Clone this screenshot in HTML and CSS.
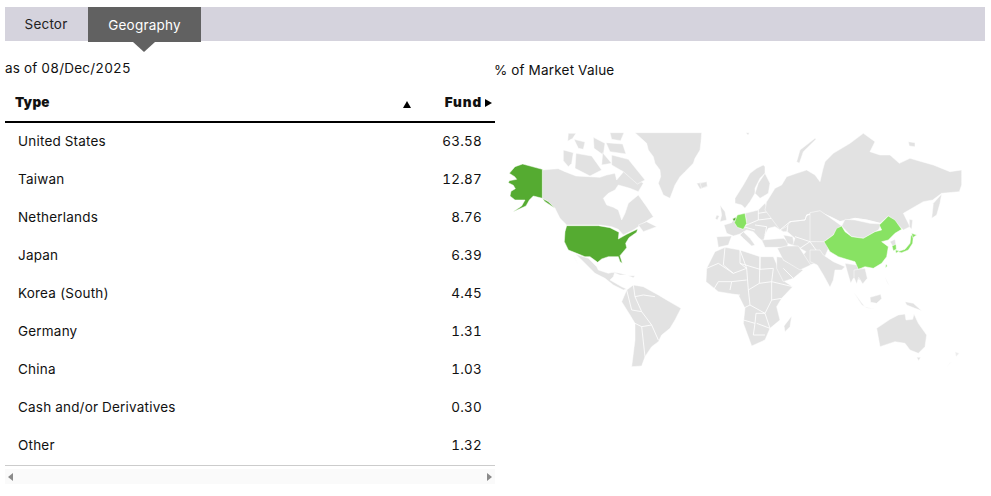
FILE: index.html
```html
<!DOCTYPE html>
<html lang="en">
<head>
<meta charset="utf-8">
<title>Exposure breakdowns</title>
<link rel="stylesheet" href="styles.css">
</head>
<body>
<nav class="tabs">
  <button class="tab">Sector</button>
  <button class="tab tab-active">Geography</button>
</nav>
<main class="panels">
  <section class="left">
    <p class="asof">as of 08/Dec/2025</p>
    <div class="table">
      <div class="head">
        <span class="head-type">Type</span>
        <span class="sort-up"></span>
        <span class="head-fund">Fund</span>
        <span class="sort-right"></span>
      </div>
      <div class="row"><span>United States</span><span>63.58</span></div>
      <div class="row"><span>Taiwan</span><span>12.87</span></div>
      <div class="row"><span>Netherlands</span><span>8.76</span></div>
      <div class="row"><span>Japan</span><span>6.39</span></div>
      <div class="row"><span>Korea (South)</span><span>4.45</span></div>
      <div class="row"><span>Germany</span><span>1.31</span></div>
      <div class="row"><span>China</span><span>1.03</span></div>
      <div class="row"><span>Cash and/or Derivatives</span><span>0.30</span></div>
      <div class="row"><span>Other</span><span>1.32</span></div>
    </div>
    <div class="scrollbar"><span class="arrow-left"></span><span class="arrow-right"></span></div>
  </section>
  <section class="right">
    <p class="maptitle">% of Market Value</p>
    <svg class="map" viewBox="495 90 490 290" width="490" height="290" aria-label="World map">
      <!-- North America, origin 500,120 -->
      <g class="land" transform="translate(500 120) scale(.33333)">
        <path d="M127 150L150 148L175 146L195 155L228 168L265 170L300 172L320 165L345 160L350 180L375 150L395 165L430 190L415 215L390 205L355 195L345 210L325 220L310 235L320 255L340 262L355 270L365 300L375 280L385 250L415 225L440 260L460 290L430 310L400 330L370 345L355 328L335 320L300 315L200 315L180 295L165 265L145 245L127 235Z"/>
        <path d="M405 38L605 38L603 65L600 90L585 115L580 130L555 155L540 170L525 195L510 235L490 225L475 190L482 170L480 150L465 130L460 110L445 90L440 70Z"/>
        <path d="M590 190L620 185L622 200L600 207Z"/>
        <path d="M205 40L228 40L218 55L203 64Z"/>
        <path d="M190 90L220 98L215 130L205 140L190 122Z"/>
        <path d="M222 58L255 66L250 88L235 85Z"/>
        <path d="M228 100L275 108L305 150L270 168L225 145Z"/>
        <path d="M280 52L315 70L310 105L282 85Z"/>
        <path d="M330 38L372 38L362 62L335 58Z"/>
        <path d="M318 68L368 72L378 102L330 95Z"/>
        <path d="M308 98L335 130L305 135Z"/>
        <path d="M335 105L385 118L435 180L412 192L370 155L335 135Z"/>
        <path d="M415 315L440 305L470 320L430 335Z"/>
        <path class="dark" d="M68 132L127 148L127 235L100 228L88 240L78 258L38 276L65 258L75 240L45 240L30 228L33 214L46 206L40 196L25 188L28 182L50 178L44 170L28 160L45 140Z"/>
        <path class="dark" d="M127 235L145 245L165 265L150 255L135 245Z"/>
      </g>
      <!-- USA and Mexico, origin 555,215 -->
      <g class="land" transform="translate(555 215) scale(.33333)">
        <path d="M62 118L100 130L125 155L130 165L160 175L180 170L175 185L165 195L200 215L215 222L205 225L175 210L150 190L120 175L90 145L75 130Z"/>
        <path d="M55 120L70 150L60 132Z"/>
        <path d="M170 170L195 175L215 180L195 180Z"/>
        <path d="M220 182L240 182L235 188Z"/>
        <path class="dark" d="M35 32L130 32L165 38L192 52L190 72L215 58L248 42L245 52L222 68L212 85L215 98L195 122L202 145L195 140L190 125L160 125L140 132L128 142L105 125L90 125L65 115L40 105L28 80L30 50Z"/>
      </g>
      <!-- South America and Africa, origin 600,240 -->
      <g class="land" transform="translate(600 240) scale(.33333)">
        <path d="M100 135L130 140L175 165L200 180L243 205L225 240L210 265L185 285L175 305L155 320L135 350L125 378L95 380L105 300L105 250L90 225L65 185L80 150Z"/>
        <path d="M345 35L375 22L420 30L480 50L520 50L540 95L555 125L578 140L545 175L530 200L540 240L510 265L495 300L455 318L430 250L435 205L415 165L355 155L318 125L320 85Z"/>
        <path d="M575 228L570 260L555 275L552 258Z"/>
        <path d="M530 50L570 55L610 90L580 115L550 125L530 85Z"/>
        <path class="border" d="M80 150L95 210L125 215M125 215L155 255L175 300M105 250L125 260L135 350M125 260L155 255M125 215L105 170L130 165L165 170M100 135L105 170"/>
        <path class="border" d="M375 22L370 75L400 100L440 85L420 30M320 85L355 70L400 100M420 30L420 70L480 88L480 50M480 50L478 130L515 125L520 85L480 88M515 125L578 140M420 70L440 85L445 150M440 120L395 125L355 125L340 150M395 125L390 150M445 150L478 130M445 150L450 195L495 220L515 180L545 175M450 195L430 205M430 240L465 250L468 220L495 220L510 265M465 250L460 285L495 285M510 265L470 250M395 165L420 165M515 125L515 180"/>
        <path class="border" d="M560 35L550 60L610 90M580 115L550 85"/>
      </g>
      <!-- Europe, Middle East, origin 700,160 -->
      <g class="land" transform="translate(700 160) scale(.33333)">
        <path d="M72 195L95 188L105 172L135 160L175 150L205 120L235 160L265 190L260 215L250 215L225 200L205 205L195 225L190 245L175 232L160 215L140 210L120 222L100 228L80 220Z"/>
        <path d="M190 15L170 25L150 40L130 75L105 115L105 130L125 135L135 145L150 125L165 100L165 85L180 55L195 40L195 20Z"/>
        <path d="M195 40L210 70L205 100L180 115L165 100L175 70Z"/>
        <path d="M130 215L150 235L165 255L155 258L130 235L120 225Z"/>
        <path d="M50 230L95 228L85 255L55 262Z"/>
        <path d="M60 135L75 155L80 180L60 185L65 165Z"/>
        <path d="M50 165L58 168L52 180L46 176Z"/>
        <path d="M0 70L20 65L22 78L5 85Z"/>
        <path d="M185 240L250 235L265 245L262 262L195 262Z"/>
        <path d="M250 225L278 230L284 258L262 250Z"/>
        <path d="M265 185L300 175L350 155L390 170L390 255L370 300L330 315L300 295L318 275L292 260L278 256L285 235L262 215Z"/>
        <path d="M258 258L295 258L332 315L300 330L250 300L232 265Z"/>
        <path class="border" d="M135 160L140 195L120 205M175 150L175 180L140 195M170 130L195 125L205 155L175 160M175 180L215 175L240 195M165 195L200 200L195 225M130 200L165 210M265 190L280 180M285 230L330 245L390 240M300 265L330 245M330 245L370 300M345 205L345 240"/>
        <path class="light" d="M112 165L135 160L140 190L130 208L112 202L103 188L108 175Z"/>
        <path class="dark" d="M98 176L108 172L106 182L100 182Z"/>
      </g>
      <!-- Russia, origin 740,120 -->
      <g class="land" transform="translate(740 120) scale(.33333)">
        <path d="M370 40L405 65L390 95L420 105L450 105L478 130L510 115L545 125L580 135L630 155L665 150L665 195L658 215L605 220L578 240L550 245L490 280L510 320L490 330L470 310L445 288L420 310L380 300L345 295L300 305L270 290L235 275L200 285L195 300L150 305L140 320L120 330L90 290L75 270L80 245L105 205L125 195L140 170L170 160L200 150L225 165L240 185L248 150L255 125L280 100L305 85L330 70Z"/>
        <path d="M225 55L180 90L170 125L178 130L190 95L228 58Z"/>
        <path d="M605 222L580 250L575 295L590 285L600 250Z"/>
        <path d="M505 65L525 68L525 80L508 78Z"/>
        <path d="M18 38L28 38L24 46Z"/>
        <path class="border" d="M120 330L150 305M150 305L195 300L200 285L235 275L270 290L300 305L345 295L380 300L420 310"/>
      </g>
      <!-- East Asia, origin 810,200 -->
      <g class="land" transform="translate(810 200) scale(.33333)">
        <path d="M0 38L30 32L70 60L95 78L70 105L42 125L20 125L0 125Z"/>
        <path d="M95 78L105 58L135 60L180 70L215 72L205 90L160 115L125 110Z"/>
        <path d="M40 165L70 185L105 200L95 210L75 210L70 240L60 262L40 225L22 195L0 185L0 150L30 150Z"/>
        <path d="M105 190L140 195L158 205L150 240L130 235L122 250L112 215Z"/>
        <path d="M240 125L255 118L258 135L248 138Z"/>
        <path d="M298 58L308 60L305 88L298 80Z"/>
        <path class="light" d="M95 78L105 95L125 110L160 115L195 95L215 90L208 75L235 48L255 60L275 88L255 100L235 120L215 125L235 140L230 170L215 190L190 205L165 200L145 208L135 185L110 178L85 170L60 155L42 125L70 105L80 85Z"/>
        <path class="light" d="M262 155L285 148L300 130L303 105L310 108L308 130L295 150L275 158Z"/>
        <path class="light" d="M305 100L320 105L308 113Z"/>
        <path class="light" d="M258 160L256 150L268 152Z"/>
        <path class="light" d="M246 138L258 133L259 148L250 152Z"/>
        <path class="light" d="M228 192L232 198L226 204Z"/>
      </g>
      <!-- Southeast Asia and Oceania, origin 830,240 -->
      <g class="land" transform="translate(830 240) scale(.33333)">
        <path d="M72 90L105 85L112 115L98 132L86 112L80 132L72 112Z"/>
        <path d="M180 238L205 225L225 222L228 240L248 238L252 222L265 250L290 285L285 320L265 340L240 330L225 310L195 305L150 320L140 265Z"/>
        <path d="M260 352L272 352L266 362Z"/>
        <path class="faint" d="M375 335L388 340L378 350Z"/>
        <path class="faint" d="M365 365L350 380L360 368Z"/>
        <path d="M225 185L250 190L275 212L255 205L230 195Z"/>
        <path d="M120 172L152 163L155 176L140 190L122 187Z"/>
        <path class="faint" d="M70 155L105 200L95 195Z"/>
        <path class="faint" d="M105 200L135 208L110 204Z"/>
        <path class="faint" d="M165 110L180 140L170 125Z"/>
      </g>
    </svg>
  </section>
</main>
</body>
</html>
```

FILE: styles.css
```css
html, body {
  margin: 0;
  padding: 0;
  background: #fff;
}
body {
  font-family: "Inter", "Liberation Sans", sans-serif;
  font-size: 13.5px;
  letter-spacing: .2px;
  font-variant-numeric: tabular-nums;
  color: #111;
  padding: 7px 6px 0 5px;
}
.tabs {
  display: flex;
  height: 34px;
  background: #d5d3dd;
}
.tab {
  position: relative;
  width: 82px;
  margin-right: 1px;
  border: 0;
  padding: 0;
  background: transparent;
  font: inherit;
  letter-spacing: inherit;
  color: #222;
}
.tab-active {
  width: 113px;
  height: 35px;
  margin: 0;
  background: #616161;
  color: #fff;
}
.tab-active::after {
  content: "";
  position: absolute;
  top: 35px;
  left: 45px;
  border-style: solid;
  border-width: 10px 11px 0;
  border-color: #616161 transparent transparent;
}
.panels {
  display: flex;
}
.left {
  width: 490px;
  flex: none;
}
.right {
  width: 490px;
  flex: none;
}
.asof {
  margin: 19px 0 0;
  line-height: 16px;
}
.maptitle {
  margin: 21px 0 0 -1px;
  line-height: 16px;
}
.table {
  margin-top: 8px;
}
.head {
  display: flex;
  align-items: center;
  height: 35px;
  padding: 0 0 2px 10px;
  border-bottom: 2px solid #000;
  font-weight: 900;
}
.head-type {
  flex: 1;
}
.head-fund {
  letter-spacing: .9px;
}
.sort-up {
  width: 0;
  height: 0;
  margin: 5px 34px 0 0;
  border-style: solid;
  border-width: 0 4px 7px;
  border-color: transparent transparent #000;
}
.sort-right {
  width: 0;
  height: 0;
  margin: 3px 3px 0 3px;
  border-style: solid;
  border-width: 4px 0 4px 7px;
  border-color: transparent transparent transparent #000;
}
.row {
  display: flex;
  justify-content: space-between;
  align-items: center;
  height: 36px;
  padding: 0 13px 2px;
}
.table .row:last-child {
  border-bottom: 1px solid #ccc;
}
.scrollbar {
  display: flex;
  justify-content: space-between;
  align-items: center;
  height: 15px;
  margin-top: 3px;
  padding: 0 3px;
  background: #fafafa;
}
.arrow-left, .arrow-right {
  width: 0;
  height: 0;
  border-style: solid;
}
.arrow-left {
  border-width: 4.5px 5px 4.5px 0;
  border-color: transparent #8a8a8a transparent transparent;
}
.arrow-right {
  border-width: 4.5px 0 4.5px 5px;
  border-color: transparent transparent transparent #8a8a8a;
}
.map {
  display: block;
  margin-top: 12px;
}
.land path {
  fill: #e2e2e2;
  stroke: #fff;
  stroke-width: 1.5;
  stroke-linejoin: round;
}
.land .dark {
  fill: #55ab31;
}
.land .light {
  fill: #88e263;
}
.land .faint {
  fill: #ececec;
}
.land .border {
  fill: none;
  stroke-width: 2.5;
}
```
